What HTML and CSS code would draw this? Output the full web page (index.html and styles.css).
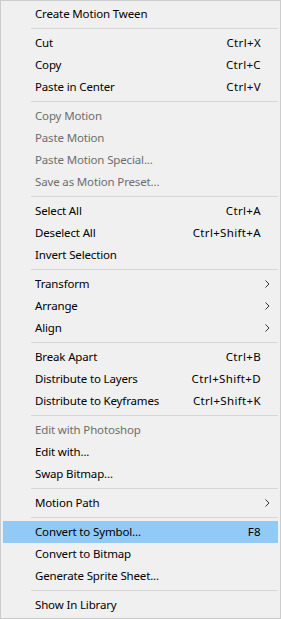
FILE: index.html
```html
<!DOCTYPE html>
<html>

<head>
    <title>Context Menu</title>
    <link rel="stylesheet" href="styles.css">
</head>

<body>
    <ul class="menu">
        <li class="item"><span class="label">Create Motion Tween</span></li>
        <li class="sep"></li>
        <li class="item"><span class="label">Cut</span><span class="key">Ctrl+X</span></li>
        <li class="item"><span class="label">Copy</span><span class="key">Ctrl+C</span></li>
        <li class="item"><span class="label">Paste in Center</span><span class="key">Ctrl+V</span></li>
        <li class="sep"></li>
        <li class="item disabled"><span class="label">Copy Motion</span></li>
        <li class="item disabled"><span class="label">Paste Motion</span></li>
        <li class="item disabled"><span class="label">Paste Motion Special...</span></li>
        <li class="item disabled"><span class="label">Save as Motion Preset...</span></li>
        <li class="sep"></li>
        <li class="item"><span class="label">Select All</span><span class="key">Ctrl+A</span></li>
        <li class="item"><span class="label">Deselect All</span><span class="key">Ctrl+Shift+A</span></li>
        <li class="item"><span class="label">Invert Selection</span></li>
        <li class="sep"></li>
        <li class="item"><span class="label">Transform</span><span class="sub"><svg width="5" height="8" viewBox="0 0 5 8"><polyline points="0.5,0.5 4,4 0.5,7.5" fill="none" stroke="#333" stroke-width="1"/></svg></span></li>
        <li class="item"><span class="label">Arrange</span><span class="sub"><svg width="5" height="8" viewBox="0 0 5 8"><polyline points="0.5,0.5 4,4 0.5,7.5" fill="none" stroke="#333" stroke-width="1"/></svg></span></li>
        <li class="item"><span class="label">Align</span><span class="sub"><svg width="5" height="8" viewBox="0 0 5 8"><polyline points="0.5,0.5 4,4 0.5,7.5" fill="none" stroke="#333" stroke-width="1"/></svg></span></li>
        <li class="sep"></li>
        <li class="item"><span class="label">Break Apart</span><span class="key">Ctrl+B</span></li>
        <li class="item"><span class="label">Distribute to Layers</span><span class="key">Ctrl+Shift+D</span></li>
        <li class="item"><span class="label">Distribute to Keyframes</span><span class="key">Ctrl+Shift+K</span></li>
        <li class="sep"></li>
        <li class="item disabled"><span class="label">Edit with Photoshop</span></li>
        <li class="item"><span class="label">Edit with...</span></li>
        <li class="item"><span class="label">Swap Bitmap...</span></li>
        <li class="sep"></li>
        <li class="item"><span class="label">Motion Path</span><span class="sub"><svg width="5" height="8" viewBox="0 0 5 8"><polyline points="0.5,0.5 4,4 0.5,7.5" fill="none" stroke="#333" stroke-width="1"/></svg></span></li>
        <li class="sep"></li>
        <li class="item active"><span class="label">Convert to Symbol...</span><span class="key">F8</span></li>
        <li class="item"><span class="label">Convert to Bitmap</span></li>
        <li class="item"><span class="label">Generate Sprite Sheet...</span></li>
        <li class="sep"></li>
        <li class="item"><span class="label">Show In Library</span></li>
    </ul>
</body>

</html>
```

FILE: styles.css
```css
body {
    margin: 0;
    font-family: "Noto Sans", "Open Sans", sans-serif;
    font-size: 11.5px;
    letter-spacing: -0.15px;
    background-color: #f0f0f0;
}

.menu {
    list-style: none;
    margin: 0;
    padding: 2px;
    width: 281px;
    height: 619px;
    box-sizing: border-box;
    border: 1px solid #cccccc;
    background-color: #f0f0f0;
    color: #000;
}

.item {
    display: flex;
    align-items: center;
    height: 22px;
    box-sizing: border-box;
    padding: 0 17px 1px 32px;
    position: relative;
}

.item .label {
    flex: 1;
    white-space: nowrap;
}

.item .key {
    white-space: nowrap;
    letter-spacing: 0.35px;
}

.item .sub {
    position: absolute;
    right: 8px;
    top: 7px;
    line-height: 0;
}

.disabled {
    color: #6d6d6d;
}

.active {
    background-color: #91c9f7;
}

.sep {
    height: 1px;
    margin: 3px 0 3px 28px;
    background-color: #d7d7d7;
}
```
